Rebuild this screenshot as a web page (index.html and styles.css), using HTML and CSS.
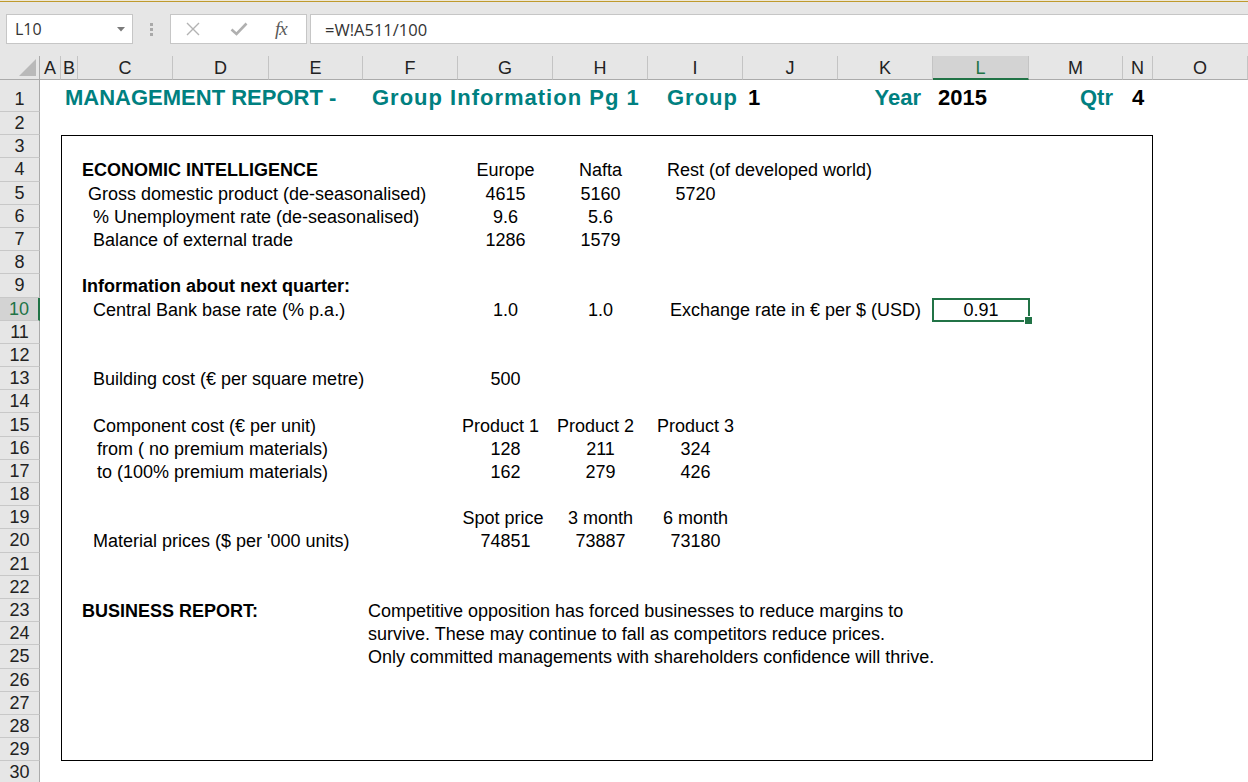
FILE: index.html
```html
<!DOCTYPE html>
<html lang="en">
<head>
<meta charset="utf-8">
<title>Management Report</title>
<link rel="stylesheet" href="styles.css">
</head>
<body>
<div class="app">
  <div class="topline"></div>
  <div class="fbar">
    <div class="namebox">
      <span>L10</span>
      <svg class="dd" width="8" height="5" viewBox="0 0 8 5"><path d="M0 0H8L4 4.5Z" fill="#7a7a7a"/></svg>
    </div>
    <div class="grip"><i></i><i></i><i></i></div>
    <div class="fxbox">
      <svg class="ico-x" width="16" height="14" viewBox="0 0 16 14"><path d="M2 1L14 13M14 1L2 13" stroke="#b3b3b3" stroke-width="1.4" fill="none"/></svg>
      <svg class="ico-ok" width="18" height="14" viewBox="0 0 18 14"><path d="M1.5 7.5L6.5 12L16.5 1.5" stroke="#b0b0b0" stroke-width="2.6" fill="none"/></svg>
      <span class="fx">fx</span>
    </div>
    <div class="formula">=W!A511/100</div>
  </div>

  <div class="sheet">
    <div class="corner"><svg width="17" height="17" viewBox="0 0 17 17"><path d="M17 0V17H0Z" fill="#b9b9b9"/></svg></div>
    <div class="ch">A</div>
    <div class="ch">B</div>
    <div class="ch">C</div>
    <div class="ch">D</div>
    <div class="ch">E</div>
    <div class="ch">F</div>
    <div class="ch">G</div>
    <div class="ch">H</div>
    <div class="ch">I</div>
    <div class="ch">J</div>
    <div class="ch">K</div>
    <div class="ch sel">L</div>
    <div class="ch">M</div>
    <div class="ch">N</div>
    <div class="ch">O</div>

    <div class="rh r1">1</div>
    <div class="rh r2">2</div>
    <div class="rh r3">3</div>
    <div class="rh r4">4</div>
    <div class="rh r5">5</div>
    <div class="rh r6">6</div>
    <div class="rh r7">7</div>
    <div class="rh r8">8</div>
    <div class="rh r9">9</div>
    <div class="rh sel r10">10</div>
    <div class="rh r11">11</div>
    <div class="rh r12">12</div>
    <div class="rh r13">13</div>
    <div class="rh r14">14</div>
    <div class="rh r15">15</div>
    <div class="rh r16">16</div>
    <div class="rh r17">17</div>
    <div class="rh r18">18</div>
    <div class="rh r19">19</div>
    <div class="rh r20">20</div>
    <div class="rh r21">21</div>
    <div class="rh r22">22</div>
    <div class="rh r23">23</div>
    <div class="rh r24">24</div>
    <div class="rh r25">25</div>
    <div class="rh r26">26</div>
    <div class="rh r27">27</div>
    <div class="rh r28">28</div>
    <div class="rh r29">29</div>
    <div class="rh r30">30</div>

    <div class="frame"></div>

    <!-- row 1 -->
    <div class="cell title r1 cB pl4">MANAGEMENT REPORT -</div>
    <div class="cell title r1 cF pl9 wide">Group Information Pg 1</div>
    <div class="cell title r1 cI pl19 wide">Group</div>
    <div class="cell title black r1 cJ pl5">1</div>
    <div class="cell title r1 cK right pr12">Year</div>
    <div class="cell title black r1 cL pl5">2015</div>
    <div class="cell title r1 cM right pr10">Qtr</div>
    <div class="cell title black r1 cN center">4</div>

    <!-- economic intelligence -->
    <div class="cell bold r4 cC pl4">ECONOMIC INTELLIGENCE</div>
    <div class="cell r4 cG center">Europe</div>
    <div class="cell r4 cH center">Nafta</div>
    <div class="cell r4 cI pl19">Rest (of developed world)</div>

    <div class="cell r5 cC pl10">Gross domestic product (de-seasonalised)</div>
    <div class="cell r5 cG center">4615</div>
    <div class="cell r5 cH center">5160</div>
    <div class="cell r5 cI center">5720</div>

    <div class="cell r6 cC pl15">% Unemployment rate (de-seasonalised)</div>
    <div class="cell r6 cG center">9.6</div>
    <div class="cell r6 cH center">5.6</div>

    <div class="cell r7 cC pl15">Balance of external trade</div>
    <div class="cell r7 cG center">1286</div>
    <div class="cell r7 cH center">1579</div>

    <div class="cell bold r9 cC pl4">Information about next quarter:</div>

    <div class="cell r10 cC pl15">Central Bank base rate (% p.a.)</div>
    <div class="cell r10 cG center">1.0</div>
    <div class="cell r10 cH center">1.0</div>
    <div class="cell r10 cIK right pr12">Exchange rate in € per $ (USD)</div>
    <div class="cell r10 cL center selcell">0.91</div>

    <div class="cell r13 cC pl15">Building cost (€ per square metre)</div>
    <div class="cell r13 cG center">500</div>

    <div class="cell r15 cC pl15">Component cost (€ per unit)</div>
    <div class="cell r15 cG center nudge">Product 1</div>
    <div class="cell r15 cH center nudge">Product 2</div>
    <div class="cell r15 cI center">Product 3</div>

    <div class="cell r16 cC pl19">from ( no premium materials)</div>
    <div class="cell r16 cG center">128</div>
    <div class="cell r16 cH center">211</div>
    <div class="cell r16 cI center">324</div>

    <div class="cell r17 cC pl19">to (100% premium materials)</div>
    <div class="cell r17 cG center">162</div>
    <div class="cell r17 cH center">279</div>
    <div class="cell r17 cI center">426</div>

    <div class="cell r19 cG center nudge4">Spot price</div>
    <div class="cell r19 cH center">3 month</div>
    <div class="cell r19 cI center">6 month</div>

    <div class="cell r20 cC pl15">Material prices ($ per '000 units)</div>
    <div class="cell r20 cG center">74851</div>
    <div class="cell r20 cH center">73887</div>
    <div class="cell r20 cI center">73180</div>

    <div class="cell bold r23 cC pl4">BUSINESS REPORT:</div>
    <div class="cell r23 cF pl5">Competitive opposition has forced businesses to reduce margins to</div>
    <div class="cell r24 cF pl5">survive. These may continue to fall as competitors reduce prices.</div>
    <div class="cell r25 cF pl5">Only committed managements with shareholders confidence will thrive.</div>
  </div>
</div>
</body>
</html>
```

FILE: styles.css
```css
* { box-sizing: border-box; margin: 0; padding: 0; }

html, body {
  width: 1248px;
  height: 782px;
  overflow: hidden;
  background: #e6e6e6;
}

body {
  font-family: "Liberation Sans", Arial, sans-serif;
  color: #000;
}

.app {
  display: flex;
  flex-direction: column;
  width: 1248px;
  height: 782px;
}

/* ---------- top line + formula bar ---------- */
.topline {
  height: 2px;
  border-top: 1px solid #ede8d6;
  border-bottom: 1px solid #bf9a2e;
}

.fbar {
  height: 54px;
  flex: none;
  display: flex;
  align-items: flex-start;
  padding: 12px 0 0 6px;
}

.namebox {
  width: 127px;
  height: 30px;
  background: #fff;
  border: 1px solid #c6c6c6;
  display: flex;
  align-items: center;
  padding: 0 7px 0 8px;
  font-family: "Open Sans", "Liberation Sans", sans-serif;
  font-size: 16px;
  color: #333;
}

.namebox .dd { margin-left: auto; }

.grip {
  width: 37px;
  height: 30px;
  display: flex;
  flex-direction: column;
  align-items: center;
  justify-content: center;
  gap: 2px;
}

.grip i {
  display: block;
  width: 3px;
  height: 3px;
  background: #a9a9a9;
}

.fxbox {
  width: 137px;
  height: 30px;
  background: #fff;
  border: 1px solid #c6c6c6;
  display: flex;
  align-items: center;
  padding-left: 14px;
}

.ico-x { margin-right: 29px; }
.ico-ok { margin-right: 27px; }

.fx {
  font-family: "Liberation Serif", "DejaVu Serif", serif;
  font-style: italic;
  font-size: 19px;
  color: #5a5a5a;
  letter-spacing: -1px;
}

.formula {
  flex: 1;
  height: 30px;
  margin-left: 3px;
  background: #fff;
  border: 1px solid #c6c6c6;
  border-right: none;
  display: flex;
  align-items: center;
  padding-left: 14px;
  font-family: "Open Sans", "Liberation Sans", sans-serif;
  font-size: 16.5px;
  color: #333;
}

/* ---------- sheet grid ---------- */
.sheet {
  flex: none;
  display: grid;
  grid-template-columns: 40px 21px 17px 95px 96px 94px 95px 95px 95px 95px 95px 95px 96px 94px 30px 1fr;
  grid-template-rows: 24px 32px repeat(29, 23.2px);
  background: #fff;
  font-size: 18px;
}

.corner {
  grid-row: 1;
  background: #e6e6e6;
  border-right: 1px solid #ababab;
  border-bottom: 1px solid #ababab;
  display: flex;
  justify-content: flex-end;
  align-items: flex-end;
  padding: 0 3px 3px 0;
}

.ch {
  grid-row: 1;
  background: #e6e6e6;
  border-right: 1px solid #c4c4c4;
  border-bottom: 1px solid #ababab;
  display: flex;
  align-items: center;
  justify-content: center;
  color: #222;
  padding-top: 2px;
}

.ch.sel {
  background: #d3d3d3;
  color: #217346;
  border-bottom: 2px solid #217346;
  padding-top: 3px;
}

.rh {
  grid-column: 1;
  background: #e6e6e6;
  border-right: 1px solid #ababab;
  border-bottom: 1px solid #c8c8c8;
  display: flex;
  align-items: center;
  justify-content: center;
  color: #222;
  padding-top: 1px;
}

.rh.r1 { padding-top: 8px; }

.rh.sel {
  background: #d3d3d3;
  color: #217346;
  border-right: 2px solid #217346;
}

.frame {
  grid-row: 4 / 31;
  grid-column: 3 / 16;
  border: 1px solid #000;
}

/* rows */
.r1 { grid-row: 2; }
.r2 { grid-row: 3; }
.r3 { grid-row: 4; }
.r4 { grid-row: 5; }
.r5 { grid-row: 6; }
.r6 { grid-row: 7; }
.r7 { grid-row: 8; }
.r8 { grid-row: 9; }
.r9 { grid-row: 10; }
.r10 { grid-row: 11; }
.r11 { grid-row: 12; }
.r12 { grid-row: 13; }
.r13 { grid-row: 14; }
.r14 { grid-row: 15; }
.r15 { grid-row: 16; }
.r16 { grid-row: 17; }
.r17 { grid-row: 18; }
.r18 { grid-row: 19; }
.r19 { grid-row: 20; }
.r20 { grid-row: 21; }
.r21 { grid-row: 22; }
.r22 { grid-row: 23; }
.r23 { grid-row: 24; }
.r24 { grid-row: 25; }
.r25 { grid-row: 26; }
.r26 { grid-row: 27; }
.r27 { grid-row: 28; }
.r28 { grid-row: 29; }
.r29 { grid-row: 30; }
.r30 { grid-row: 31; }

/* columns */
.cB { grid-column: 3; }
.cC { grid-column: 4; }
.cF { grid-column: 7; }
.cG { grid-column: 8; }
.cH { grid-column: 9; }
.cI { grid-column: 10; }
.cJ { grid-column: 11; }
.cK { grid-column: 12; }
.cL { grid-column: 13; }
.cM { grid-column: 14; }
.cN { grid-column: 15; }
.cIK { grid-column: 10 / 13; }

/* cells */
.cell {
  display: flex;
  align-items: center;
  white-space: nowrap;
  min-width: 0;
  padding-top: 2px;
}

.bold { font-weight: bold; }
.center { justify-content: center; }
.right { justify-content: flex-end; }
.nudge { padding-right: 10px; }
.nudge4 { padding-right: 5px; }

.pl4 { padding-left: 4px; }
.pl5 { padding-left: 5px; }
.pl9 { padding-left: 9px; }
.pl10 { padding-left: 10px; }
.pl15 { padding-left: 15px; }
.pl19 { padding-left: 19px; }
.pr10 { padding-right: 10px; }
.pr12 { padding-right: 12px; }

.title {
  font-size: 22px;
  font-weight: bold;
  color: #008080;
  align-items: flex-end;
  padding-top: 0;
  padding-bottom: 1px;
}

.title.wide { letter-spacing: 1px; }
.title.black { color: #000; }

.selcell {
  position: relative;
  border: 2px solid #217346;
  margin: 0 -1px -1px -1px;
  padding-top: 1px;
}

.selcell::after {
  content: "";
  position: absolute;
  right: -5px;
  bottom: -5px;
  width: 7px;
  height: 7px;
  background: #217346;
  border: 1px solid #fff;
}
```
